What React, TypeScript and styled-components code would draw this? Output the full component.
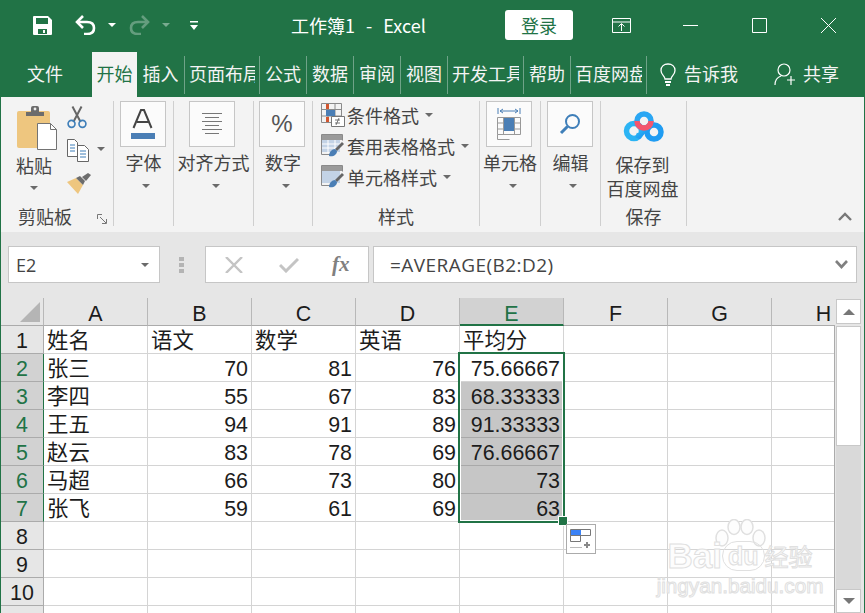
import React, {FC} from 'react';
import styled, {createGlobalStyle} from 'styled-components';

const GREEN = '#217346';
const CJK = '"Noto Sans CJK SC", "Noto Sans", sans-serif';

const Global = createGlobalStyle`
    html, body {
        margin: 0;
        padding: 0;
        background: #fff;
    }
    * {
        box-sizing: border-box;
    }
`

const Window = styled.div`
    width: 865px;
    height: 613px;
    overflow: hidden;
    border-left: 1px solid ${GREEN};
    border-right: 1px solid ${GREEN};
    font-family: ${CJK};
    display: flex;
    flex-direction: column;
    background: #fff;
`

/* title bar */
const TitleBar = styled.div`
    height: 50px;
    flex: none;
    display: flex;
    align-items: center;
    padding: 0 28px 0 32px;
    background: ${GREEN};
    color: #fff;
`

const Slot = styled.span<{ $ml?: number; $w?: number; $dim?: boolean }>`
    flex: none;
    display: flex;
    margin-left: ${p => p.$ml ?? 0}px;
    width: ${p => (p.$w ? `${p.$w}px` : 'auto')};
    opacity: ${p => (p.$dim ? 0.4 : 1)};
    svg {
        display: block;
    }
`

const TitleText = styled.span`
    margin-left: 93px;
    font-size: 18px;
    line-height: 24px;
    white-space: nowrap;
    word-spacing: 1.5px;
`

const Login = styled.button`
    margin-left: auto;
    width: 68px;
    height: 30px;
    padding: 0;
    border: 0;
    border-radius: 3px;
    background: #fff;
    color: ${GREEN};
    font-family: ${CJK};
    font-size: 18px;
    line-height: 30px;
`

/* tabs */
const TabBar = styled.div`
    height: 47px;
    flex: none;
    padding-top: 2px;
    display: flex;
    align-items: center;
    background: ${GREEN};
    color: #f4f4f4;
    font-size: 18px;
`

const Tab = styled.div<{ $w: number; $active?: boolean; $pr?: number }>`
    flex: none;
    width: ${p => p.$w}px;
    height: 45px;
    line-height: 42px;
    padding: 0 ${p => p.$pr ?? 4}px 0 4px;
    background: ${p => (p.$active ? '#f3f3f3' : 'transparent')};
    color: ${p => (p.$active ? GREEN : 'inherit')};
    span {
        display: block;
        overflow: hidden;
        white-space: nowrap;
        text-align: center;
    }
`

const TabSep = styled.i`
    flex: none;
    width: 1px;
    height: 38px;
    background: #6fa388;
`

const TabText = styled.span<{ $ml: number }>`
    margin: 0 0 4px ${p => p.$ml}px;
    white-space: nowrap;
`

/* ribbon */
const Ribbon = styled.div`
    height: 135px;
    flex: none;
    display: flex;
    padding: 4px 0 6px;
    background: #f3f3f3;
    color: #444;
    font-size: 18px;
    line-height: 24px;
`

const Group = styled.section<{ $w: number }>`
    flex: none;
    width: ${p => p.$w}px;
    display: flex;
    flex-direction: column;
    border-right: 1px solid #cfcfcf;
    position: relative;
`

const GroupBody = styled.div`
    flex: 1;
    display: flex;
    flex-direction: column;
    align-items: center;
`

const GroupLabel = styled.div`
    height: 20px;
    line-height: 20px;
    text-align: center;
    white-space: nowrap;
`

const ClipLabel = styled.span`
    margin-right: 24px;
`

const IconBox = styled.div<{ $back: number }>`
    width: 46px;
    height: 46px;
    margin-right: ${p => p.$back}px;
    background: #fbfbfb;
    border: 1px solid #c6c6c6;
    display: flex;
    align-items: center;
    justify-content: center;
`

const PercentSign = styled.span`
    font-family: "Liberation Sans", sans-serif;
    font-size: 24px;
    color: #555;
`

const BigLabel = styled.div`
    margin-top: 3px;
    white-space: nowrap;
`

const Caret = styled.i<{ $mt?: number; $ml?: number; $mr?: number; $c?: string }>`
    flex: none;
    display: block;
    width: 0;
    height: 0;
    margin-top: ${p => p.$mt ?? 0}px;
    margin-left: ${p => p.$ml ?? 0}px;
    margin-right: ${p => p.$mr ?? 0}px;
    border-left: 4px solid transparent;
    border-right: 4px solid transparent;
    border-top: 4px solid ${p => p.$c ?? '#6a6a6a'};
`

const ClipBody = styled.div`
    flex: 1;
    display: flex;
`

const PasteCol = styled.div`
    width: 66px;
    padding-top: 4px;
    display: flex;
    flex-direction: column;
    align-items: center;
    svg {
        display: block;
        margin-left: 8px;
    }
`

const PasteLabel = styled.div`
    margin-top: 2px;
`

const ClipTools = styled.div`
    display: flex;
    flex-direction: column;
`

const ClipTool = styled.div<{ $h: number }>`
    height: ${p => p.$h}px;
    display: flex;
    align-items: center;
`

const Launcher = styled.svg`
    position: absolute;
    left: 96px;
    bottom: 2px;
`

const StyleRows = styled.div`
    flex: 1;
    margin-top: -2px;
    padding-left: 8px;
`

const StyleRow = styled.div`
    height: 31px;
    display: flex;
    align-items: center;
    white-space: nowrap;
    svg {
        flex: none;
        margin-right: 2px;
    }
`

const SaveBody = styled(GroupBody)`
    padding-top: 8px;
    svg {
        display: block;
    }
`

const SaveText = styled.div`
    margin-top: 9px;
    margin-right: 2px;
    line-height: 24px;
    text-align: center;
`

const Collapse = styled.svg`
    margin: auto 12px 5px auto;
    flex: none;
`

/* formula bar */
const FormulaBar = styled.div`
    height: 66px;
    flex: none;
    display: flex;
    padding: 14px 0 0 7px;
    background: #e6e6e6;
    font-family: "Open Sans", "Noto Sans", sans-serif;
    font-size: 18px;
    color: #444;
`

const FieldBox = styled.div<{ $w: number; $ml?: number }>`
    flex: none;
    width: ${p => p.$w}px;
    height: 37px;
    margin-left: ${p => p.$ml ?? 0}px;
    background: #fff;
    border: 1px solid #c6c6c6;
    display: flex;
    align-items: center;
    white-space: nowrap;
`

const NameText = styled.span`
    margin-left: 7px;
    flex: 1;
`

const Dots = styled.div`
    margin-left: 19px;
    width: 5px;
    height: 37px;
    display: flex;
    flex-direction: column;
    justify-content: center;
    gap: 2px;
    i {
        display: block;
        width: 5px;
        height: 4px;
        background: #b4b4b4;
    }
`

const Fx = styled.span`
    font-family: "Liberation Serif", serif;
    font-style: italic;
    font-weight: 700;
    font-size: 21px;
    color: #808080;
    margin-left: 33px;
`

const FormulaText = styled.span`
    margin-left: 16px;
    flex: 1;
    font-size: 19px;
    letter-spacing: 0.45px;
`

const ExpandSlot = styled(Slot)`
    margin-right: 8px;
`

/* sheet */
const Sheet = styled.div`
    flex: 1;
    min-height: 0;
    display: flex;
    background: #fff;
`

const GridArea = styled.div`
    width: 834px;
    flex: none;
    position: relative;
    overflow: hidden;
    font-family: "Liberation Sans", ${CJK};
    font-size: 21.4px;
    color: #1c1c1c;
`

const GridRow = styled.div`
    display: grid;
    grid-template-columns: 43px repeat(8, 104px);
    grid-template-rows: 28px;
    height: 28px;
`

const Corner = styled.div`
    background: #e6e6e6;
    border-right: 1px solid #b8b8b8;
    border-bottom: 1px solid #ababab;
    position: relative;
    &::after {
        content: "";
        position: absolute;
        right: 3px;
        bottom: 3px;
        border-left: 20px solid transparent;
        border-bottom: 20px solid #b5b5b5;
    }
`

const ColHead = styled.div<{ $on?: boolean }>`
    background: ${p => (p.$on ? '#d2d2d2' : '#e6e6e6')};
    color: ${p => (p.$on ? GREEN : 'inherit')};
    border-right: 1px solid #b8b8b8;
    border-bottom: ${p => (p.$on ? `2px solid ${GREEN}` : '1px solid #ababab')};
    text-align: center;
    line-height: 27px;
    padding-top: 3px;
`

const RowHead = styled.div<{ $on?: boolean }>`
    background: ${p => (p.$on ? '#d2d2d2' : '#e6e6e6')};
    color: ${p => (p.$on ? GREEN : 'inherit')};
    border-right: ${p => (p.$on ? `1px solid ${GREEN}` : '1px solid #ababab')};
    border-bottom: 1px solid #ababab;
    text-align: center;
    line-height: 31px;
`

const Cell = styled.div<{ $num?: boolean; $sel?: boolean }>`
    background: ${p => (p.$sel ? '#c6c6c6' : '#fff')};
    border-right: 1px solid #d4d4d4;
    border-bottom: 1px solid ${p => (p.$sel ? '#a9a9a9' : '#d4d4d4')};
    padding: 0 3px;
    line-height: 31px;
    text-align: ${p => (p.$num ? 'right' : 'left')};
    white-space: nowrap;
`

const RightEdge = styled.div`
    position: absolute;
    top: 28px;
    bottom: 0;
    right: 0;
    width: 1px;
    background: #ababab;
`

const Selection = styled.div`
    position: absolute;
    left: 457px;
    top: 54px;
    width: 107px;
    height: 171px;
    border: 2px solid ${GREEN};
    box-shadow: inset 0 0 0 1px #fff;
`

const FillHandle = styled.div`
    position: absolute;
    left: 558px;
    top: 219px;
    width: 8px;
    height: 8px;
    background: ${GREEN};
    outline: 1px solid #fff;
`

const AutoFill = styled.div`
    position: absolute;
    left: 565px;
    top: 226px;
    width: 30px;
    height: 30px;
    background: #fff;
    border: 1px solid #ababab;
    padding: 4px 0 0 3px;
    svg {
        display: block;
    }
`

const Watermark = styled.div`
    position: absolute;
    left: 660px;
    top: 221px;
    width: 158px;
    display: flex;
    flex-direction: column;
    align-items: center;
    pointer-events: none;
    color: #fdfdfd;
    -webkit-text-stroke: 1px #e0e0e0;
    svg {
        display: block;
    }
`

const MarkBrand = styled.div`
    margin-top: -12px;
    display: flex;
    align-items: center;
    font-family: "Liberation Sans", sans-serif;
    font-weight: 700;
    font-size: 35px;
    line-height: 28px;
    white-space: nowrap;
    em {
        font-style: normal;
        font-size: 25px;
        padding: 0 5px;
        border: 1.5px solid #e0e0e0;
        border-radius: 16px;
    }
    b {
        font-family: ${CJK};
        font-weight: 400;
        font-size: 24px;
    }
`

const MarkUrl = styled.div`
    margin-top: 3px;
    font-family: "Liberation Sans", sans-serif;
    font-size: 20.7px;
    line-height: 24px;
    white-space: nowrap;
`

const ScrollCol = styled.div`
    flex: 1;
    padding: 1px 3px 0 1px;
    display: flex;
    flex-direction: column;
    background: #e6e6e6;
`

const ScrollBtn = styled.div<{ $h: number }>`
    flex: none;
    height: ${p => p.$h}px;
    background: #fff;
    border: 1px solid #c8c8c8;
    display: flex;
    align-items: center;
    justify-content: center;
`

const ScrollTrack = styled.div`
    flex: 1;
    margin-top: 2px;
    background: #d9d9d9;
`

const ScrollThumb = styled.div`
    height: 120px;
    background: #fff;
    border: 1px solid #c8c8c8;
`

const UpArrow = styled.i`
    width: 0;
    height: 0;
    border-left: 6px solid transparent;
    border-right: 6px solid transparent;
    border-bottom: 6px solid #777;
`

const DownArrow = styled.i`
    width: 0;
    height: 0;
    border-left: 6px solid transparent;
    border-right: 6px solid transparent;
    border-top: 6px solid #777;
`

/* icons */
const SaveIcon = () => (
    <svg width="19" height="19" viewBox="0 0 19 19">
        <path fillRule="evenodd" fill="#fff" d="M1 0h14l4 4v14a1 1 0 0 1-1 1H1a1 1 0 0 1-1-1V1a1 1 0 0 1 1-1zM3 2v6h12V2zM5 13v5h9v-5zM10 14h2v3h-2z"/>
    </svg>
);

const UndoIcon = ({off}: { off?: boolean }) => (
    <svg width="21" height="20" viewBox="0 0 21 20" style={off ? {transform: 'scaleX(-1)', opacity: .3} : undefined}>
        <path d="M8 1L2 7l6 6" fill="none" stroke="#fff" strokeWidth="2.6"/>
        <path d="M3 7h9c4 0 7 2 7 6s-3 6-7 6H9" fill="none" stroke="#fff" strokeWidth="2.6"/>
    </svg>
);

const CustomizeIcon = () => (
    <svg width="8" height="9" viewBox="0 0 8 9">
        <path d="M0 0h8v1.4H0zM0 4h8L4 9z" fill="#fff"/>
    </svg>
);

const RestoreIcon = () => (
    <svg width="19" height="15" viewBox="0 0 19 15">
        <path d="M.5.5h18v14H.5zM.5 4h18M9.5 13V6M6.5 8.5l3-3 3 3" fill="none" stroke="#fff"/>
    </svg>
);

const MinIcon = () => (
    <svg width="15" height="1" viewBox="0 0 15 1"><path d="M0 .5h15" stroke="#fff"/></svg>
);

const MaxIcon = () => (
    <svg width="15" height="15" viewBox="0 0 15 15"><path d="M.5.5h14v14H.5z" fill="none" stroke="#fff"/></svg>
);

const CloseIcon = () => (
    <svg width="15" height="15" viewBox="0 0 15 15"><path d="M0 0l15 15M15 0L0 15" stroke="#fff" fill="none"/></svg>
);

const BulbIcon = () => (
    <svg width="16" height="24" viewBox="0 0 16 24" fill="none" stroke="#fff" strokeWidth="1.3">
        <path d="M5 16c0-3-4-4-4-8.500C1 3.500 4 1 8 1s7 2.500 7 6.500c0 4.500-4 5.500-4 8.500z"/>
        <path d="M5 19h6M6 22h4" strokeWidth="1.8"/>
    </svg>
);

const PersonIcon = () => (
    <svg width="21" height="23" viewBox="0 0 21 23" fill="none" stroke="#fff" strokeWidth="1.2">
        <circle cx="10" cy="7" r="6"/>
        <path d="M1 22c0-5 3-8 6-9M13 17h8M17 13v9"/>
    </svg>
);

const PasteIcon = () => (
    <svg width="46" height="46" viewBox="0 0 46 46">
        <rect x="2" y="6" width="33" height="37" rx="2" fill="#eec67f"/>
        <path d="M11 11V7h5V3a2 2 0 0 1 2-2h4a2 2 0 0 1 2 2v4h5v4z" fill="#6c6c6c"/>
        <circle cx="20" cy="4" r="1.400" fill="#eee"/>
        <path d="M22.500 18.500h13l6 6v20h-19z" fill="#fff" stroke="#737373"/>
        <path d="M35.500 18.500v6h6" fill="none" stroke="#737373"/>
    </svg>
);

const ScissorsIcon = () => (
    <svg width="20" height="23" viewBox="0 0 22 24" fill="none">
        <path d="M6 0l9 17M16 0L7 17" stroke="#666" strokeWidth="2.200"/>
        <circle cx="5" cy="19" r="3.800" stroke="#3f7fb9" strokeWidth="1.800"/>
        <circle cx="17" cy="19" r="3.800" stroke="#3f7fb9" strokeWidth="1.800"/>
    </svg>
);

const CopyIcon = () => (
    <svg width="23" height="23" viewBox="0 0 23 23" fill="#fff" stroke="#666">
        <path d="M.5.5h7l3 3v14H.5z"/>
        <path d="M3 6h5M3 9h5M3 12h5" stroke="#3f7fb9"/>
        <path d="M10.500 6.500h7l4 4v12h-11z"/>
        <path d="M13 12h6M13 15h6M13 18h6" stroke="#3f7fb9"/>
    </svg>
);

const BrushIcon = () => (
    <svg width="24" height="21" viewBox="0 0 24 21">
        <path d="M0 9l9-4 7 7-5 9z" fill="#eec67f"/>
        <path d="M9 5l4-2 5 5-2 4z" fill="#6c6c6c"/>
        <path d="M15 4l6-4 3 2-5 6z" fill="#6c6c6c"/>
    </svg>
);

const FontIcon = () => (
    <svg width="24" height="31" viewBox="0 0 24 31">
        <path d="M2.500 19L10 1h3l7.500 18M6 13h12" fill="none" stroke="#444" strokeWidth="2"/>
        <rect y="24" width="24" height="6" fill="#4a7eb5"/>
    </svg>
);

const AlignIcon = () => (
    <svg width="20" height="22" viewBox="0 0 20 22" stroke="#777">
        <path d="M0 .5h20M3 4.500h14M0 8.500h20M3 12.500h14M0 16.500h20M3 20.500h14" fill="none"/>
    </svg>
);

const CellsIcon = () => (
    <svg width="24" height="34" viewBox="0 0 24 34">
        <path d="M1 1v6M23 1v6M3 4h18M3 4l3-2M3 4l3 2M21 4l-3-2M21 4l-3 2" fill="none" stroke="#4a7eb5"/>
        <path d="M.5 10.500h23v17H.5zM.5 16h23M.5 22h23M6.500 10v18M17.500 10v18M.5 27.500v5h12" fill="none" stroke="#999"/>
        <rect x="7" y="11" width="10" height="13" fill="#4a7eb5"/>
    </svg>
);

const SearchIcon = () => (
    <svg width="22" height="22" viewBox="0 0 22 22" fill="none" stroke="#3f7fb9">
        <circle cx="13.500" cy="8.500" r="6.500" strokeWidth="2"/>
        <path d="M8.500 13.500L2 20" strokeWidth="3"/>
    </svg>
);

const CondIcon = () => (
    <svg width="24" height="24" viewBox="0 0 24 24">
        <path d="M.5.500h20v19H.5zM.5 6.500h20M.5 13h20M7 .5v19M14 .5v19" fill="none" stroke="#8a8a8a"/>
        <rect x="5" y="1" width="3" height="5" fill="#d2562f"/>
        <rect x="5" y="7" width="9" height="6" fill="#4a7eb5"/>
        <rect x="5" y="14" width="3" height="5" fill="#d2562f"/>
        <path d="M10.500 13.500h13v10h-13z" fill="#fff" stroke="#777"/>
        <path d="M14 17h5M14 20h5M15 22l3-7" fill="none" stroke="#555" strokeWidth=".8"/>
    </svg>
);

const TableIcon = ({soft}: { soft?: boolean }) => (
    <svg width="24" height="24" viewBox="0 0 24 24">
        <rect x="1" y="1" width="20" height="5" fill="#9a9a9a"/>
        <rect x="1" y="6" width="18" height="12" fill="#c3d3e6"/>
        <path d="M.5.500h21M.5.500v20h9M21.500.5v6" fill="none" stroke="#8a8a8a"/>
        {!soft && <path d="M1 10h19M1 14h15M7 6v13M14 6v10" stroke="#fff" fill="none"/>}
        <path d="M14 15l7-7 2 2-7 7z" fill="#666"/>
        <path d="M8 22c0-4 3-7 6-7l2 2c0 4-4 6-8 5z" fill="#4a7eb5"/>
    </svg>
);

const BaiduCloud = () => (
    <svg width="42" height="34" viewBox="0 0 42 34" fill="none">
        <defs>
            <linearGradient id="cloudBlue" x1="0" x2="1" y1="0" y2="1">
                <stop offset="0" stopColor="#2ec5f7"/>
                <stop offset="1" stopColor="#1c8cf0"/>
            </linearGradient>
        </defs>
        <circle cx="11" cy="22" r="7.500" stroke="#2bb4f4" strokeWidth="5.500"/>
        <circle cx="31" cy="23" r="7" stroke="#1f9cf2" strokeWidth="5.500"/>
        <path d="M13 26l5 2M24 19l-8 8" stroke="url(#cloudBlue)" strokeWidth="5"/>
        <circle cx="21" cy="12" r="7" stroke="#2aa6f3" strokeWidth="5.500"/>
        <path d="M14 12a7 7 0 0 0 14 0" stroke="#f4566e" strokeWidth="5.500"/>
    </svg>
);

const Paw = () => (
    <svg width="54" height="34" viewBox="0 0 54 34" fill="#fdfdfd" stroke="#e0e0e0" strokeWidth="1.500">
        <ellipse cx="9" cy="19" rx="6" ry="8"/>
        <ellipse cx="21" cy="8" rx="6" ry="7.500"/>
        <ellipse cx="34" cy="8" rx="6" ry="7.500"/>
        <ellipse cx="46" cy="19" rx="6" ry="8"/>
    </svg>
);

const AutoFillIcon = () => (
    <svg width="24" height="23" viewBox="0 0 24 23">
        <rect x="1" y="1" width="10" height="6" fill="#3b82f6"/>
        <path d="M.5.500h20v6H.5zM.5 6.500h10v6H.5z" fill="none" stroke="#777"/>
        <path d="M.5 18.500h11" stroke="#777" strokeDasharray="1 1"/>
        <path d="M14 16h6M17 13v6" stroke="#888" strokeWidth="2"/>
    </svg>
);

/* data */
type TabDef = { label: string; w: number; sep?: boolean; active?: boolean; pr?: number };

const TABS: TabDef[] = [
    {label: '文件', w: 91, pr: 7},
    {label: '开始', w: 45, active: true},
    {label: '插入', w: 47, sep: true},
    {label: '页面布局', w: 74, sep: true},
    {label: '公式', w: 46, sep: true},
    {label: '数据', w: 46, sep: true},
    {label: '审阅', w: 46, sep: true},
    {label: '视图', w: 46, sep: true},
    {label: '开发工具', w: 75, sep: true},
    {label: '帮助', w: 46, sep: true},
    {label: '百度网盘', w: 75, sep: true},
];

const COLS = ['A', 'B', 'C', 'D', 'E', 'F', 'G', 'H'];

const ROWS: string[][] = [
    ['姓名', '语文', '数学', '英语', '平均分'],
    ['张三', '70', '81', '76', '75.66667'],
    ['李四', '55', '67', '83', '68.33333'],
    ['王五', '94', '91', '89', '91.33333'],
    ['赵云', '83', '78', '69', '76.66667'],
    ['马超', '66', '73', '80', '73'],
    ['张飞', '59', '61', '69', '63'],
    [], [], [], [],
];

const BigButton: FC<{ label: string; back?: number; children: React.ReactNode }> = ({label, back = 2, children}) => (
    <GroupBody>
        <IconBox $back={back}>{children}</IconBox>
        <BigLabel>{label}</BigLabel>
        <Caret $mt={10} $ml={5}/>
    </GroupBody>
);

const App: FC = () => {
    return (
        <Window>
            <Global/>
            <TitleBar>
                <Slot $w={19}><SaveIcon/></Slot>
                <Slot $ml={23} $w={21}><UndoIcon/></Slot>
                <Slot $ml={12} $w={8}><Caret $c="#fff"/></Slot>
                <Slot $ml={13} $w={21}><UndoIcon off/></Slot>
                <Slot $ml={12} $w={8} $dim><Caret $c="#fff"/></Slot>
                <Slot $ml={20} $w={8}><CustomizeIcon/></Slot>
                <TitleText>工作簿1 &nbsp;-&nbsp; Excel</TitleText>
                <Login>登录</Login>
                <Slot $ml={39}><RestoreIcon/></Slot>
                <Slot $ml={52}><MinIcon/></Slot>
                <Slot $ml={54}><MaxIcon/></Slot>
                <Slot $ml={54}><CloseIcon/></Slot>
            </TitleBar>

            <TabBar>
                {TABS.map(t => (
                    <React.Fragment key={t.label}>
                        <Tab $w={t.w} $active={t.active} $pr={t.pr}><span>{t.label}</span></Tab>
                        {t.sep && <TabSep/>}
                    </React.Fragment>
                ))}
                <Slot $ml={13}><BulbIcon/></Slot>
                <TabText $ml={8}>告诉我</TabText>
                <Slot $ml={36}><PersonIcon/></Slot>
                <TabText $ml={8}>共享</TabText>
            </TabBar>

            <Ribbon>
                <Group $w={113}>
                    <ClipBody>
                        <PasteCol>
                            <PasteIcon/>
                            <PasteLabel>粘贴</PasteLabel>
                            <Caret $mt={9}/>
                        </PasteCol>
                        <ClipTools>
                            <ClipTool $h={32}><ScissorsIcon/></ClipTool>
                            <ClipTool $h={34}><CopyIcon/><Caret $ml={7} $mt={-2}/></ClipTool>
                            <ClipTool $h={32}><BrushIcon/></ClipTool>
                        </ClipTools>
                    </ClipBody>
                    <GroupLabel>
                        <ClipLabel>剪贴板</ClipLabel>
                    </GroupLabel>
                    <Launcher width="10" height="10" viewBox="0 0 10 10" fill="none" stroke="#777">
                        <path d="M.5 5V.5H5M3 3l6 6M9.500 5v4.500H5"/>
                    </Launcher>
                </Group>
                <Group $w={60}>
                    <BigButton label="字体"><FontIcon/></BigButton>
                    <GroupLabel/>
                </Group>
                <Group $w={80}>
                    <BigButton label="对齐方式" back={4}><AlignIcon/></BigButton>
                    <GroupLabel/>
                </Group>
                <Group $w={59}>
                    <BigButton label="数字">
                        <PercentSign>%</PercentSign>
                    </BigButton>
                    <GroupLabel/>
                </Group>
                <Group $w={167}>
                    <StyleRows>
                        <StyleRow><CondIcon/>条件格式<Caret $ml={6}/></StyleRow>
                        <StyleRow><TableIcon/>套用表格格式<Caret $ml={6}/></StyleRow>
                        <StyleRow><TableIcon soft/>单元格样式<Caret $ml={6}/></StyleRow>
                    </StyleRows>
                    <GroupLabel>样式</GroupLabel>
                </Group>
                <Group $w={61}>
                    <BigButton label="单元格"><CellsIcon/></BigButton>
                    <GroupLabel/>
                </Group>
                <Group $w={60}>
                    <BigButton label="编辑"><SearchIcon/></BigButton>
                    <GroupLabel/>
                </Group>
                <Group $w={86}>
                    <SaveBody>
                        <BaiduCloud/>
                        <SaveText>保存到<br/>百度网盘</SaveText>
                    </SaveBody>
                    <GroupLabel>保存</GroupLabel>
                </Group>
                <Collapse width="14" height="9" viewBox="0 0 14 9" fill="none" stroke="#777" strokeWidth="2.400">
                    <path d="M1 8l6-6 6 6"/>
                </Collapse>
            </Ribbon>

            <FormulaBar>
                <FieldBox $w={152}>
                    <NameText>E2</NameText>
                    <Caret $mr={10}/>
                </FieldBox>
                <Dots><i/><i/><i/></Dots>
                <FieldBox $w={164} $ml={21}>
                    <Slot $ml={19}>
                        <svg width="18" height="16" viewBox="0 0 18 16"><path d="M1 0l16 16M17 0L1 16" stroke="#c4c4c4" strokeWidth="2.400"/></svg>
                    </Slot>
                    <Slot $ml={36}>
                        <svg width="20" height="16" viewBox="0 0 20 16"><path d="M1 8l6 6L19 2" fill="none" stroke="#c4c4c4" strokeWidth="3"/></svg>
                    </Slot>
                    <Fx>fx</Fx>
                </FieldBox>
                <FieldBox $w={484} $ml={4}>
                    <FormulaText>=AVERAGE(B2:D2)</FormulaText>
                    <ExpandSlot>
                        <svg width="13" height="9" viewBox="0 0 13 9"><path d="M1 1l5.500 6L12 1" fill="none" stroke="#808080" strokeWidth="2.600"/></svg>
                    </ExpandSlot>
                </FieldBox>
            </FormulaBar>

            <Sheet>
                <GridArea>
                    <GridRow>
                        <Corner/>
                        {COLS.map(c => <ColHead key={c} $on={c === 'E'}>{c}</ColHead>)}
                    </GridRow>
                    {ROWS.map((row, r) => (
                        <GridRow key={r}>
                            <RowHead $on={r >= 1 && r <= 6}>{r + 1}</RowHead>
                            {COLS.map((c, i) => (
                                <Cell key={c} $num={r > 0 && i > 0} $sel={i === 4 && r >= 2 && r <= 6}>
                                    {row[i]}
                                </Cell>
                            ))}
                        </GridRow>
                    ))}
                    <RightEdge/>
                    <Selection/>
                    <FillHandle/>
                    <AutoFill><AutoFillIcon/></AutoFill>
                    <Watermark>
                        <Paw/>
                        <MarkBrand>Bai<em>du</em><b>经验</b></MarkBrand>
                        <MarkUrl>jingyan.baidu.com</MarkUrl>
                    </Watermark>
                </GridArea>
                <ScrollCol>
                    <ScrollBtn $h={25}><UpArrow/></ScrollBtn>
                    <ScrollTrack><ScrollThumb/></ScrollTrack>
                    <ScrollBtn $h={24}><DownArrow/></ScrollBtn>
                </ScrollCol>
            </Sheet>
        </Window>
    );
};

export default App;
